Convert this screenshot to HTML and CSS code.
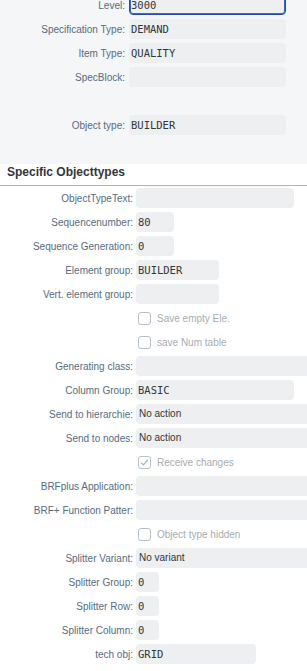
FILE: index.html
```html
<!DOCTYPE html>
<html lang="en">
<head>
    <meta charset="UTF-8">
    <meta name="viewport" content="width=device-width, initial-scale=1.0">
    <title>Object Type Details</title>
    <link rel="stylesheet" href="styles.css">
</head>
<body>
    <!-- General section (scrolled, first row cut off) -->
    <div class="general">
        <div class="form top-form">
            <div class="row"><label>Level:</label><span class="field mono focused w-top">3000</span></div>
            <div class="row"><label>Specification Type:</label><span class="field mono w-top">DEMAND</span></div>
            <div class="row"><label>Item Type:</label><span class="field mono w-top">QUALITY</span></div>
            <div class="row"><label>SpecBlock:</label><span class="field w-top"></span></div>
            <div class="row"></div>
            <div class="row"><label>Object type:</label><span class="field mono w-top">BUILDER</span></div>
        </div>
    </div>

    <h2 class="section-title">Specific Objecttypes</h2>

    <div class="form bottom-form">
        <div class="row"><label>ObjectTypeText:</label><span class="field w-158"></span></div>
        <div class="row"><label>Sequencenumber:</label><span class="field mono w-38">80</span></div>
        <div class="row"><label>Sequence Generation:</label><span class="field mono w-38">0</span></div>
        <div class="row"><label>Element group:</label><span class="field mono w-83">BUILDER</span></div>
        <div class="row"><label>Vert. element group:</label><span class="field w-83"></span></div>
        <div class="row"><label></label><span class="check"><span class="box"></span>Save empty Ele.</span></div>
        <div class="row"><label></label><span class="check"><span class="box"></span>save Num table</span></div>
        <div class="row"><label>Generating class:</label><span class="field w-full"></span></div>
        <div class="row"><label>Column Group:</label><span class="field mono w-158">BASIC</span></div>
        <div class="row"><label>Send to hierarchie:</label><span class="field w-full">No action</span></div>
        <div class="row"><label>Send to nodes:</label><span class="field w-full">No action</span></div>
        <div class="row"><label></label><span class="check"><span class="box checked"><svg width="11" height="11" viewBox="0 0 11 11"><path d="M2.2 5.6 L4.4 7.9 L8.8 2.8" fill="none" stroke="#8fb4d8" stroke-width="1.1"/></svg></span>Receive changes</span></div>
        <div class="row"><label>BRFplus Application:</label><span class="field w-full"></span></div>
        <div class="row"><label>BRF+ Function Patter:</label><span class="field w-full"></span></div>
        <div class="row"><label></label><span class="check"><span class="box"></span>Object type hidden</span></div>
        <div class="row"><label>Splitter Variant:</label><span class="field w-full">No variant</span></div>
        <div class="row"><label>Splitter Group:</label><span class="field mono w-23">0</span></div>
        <div class="row"><label>Splitter Row:</label><span class="field mono w-23">0</span></div>
        <div class="row"><label>Splitter Column:</label><span class="field mono w-23">0</span></div>
        <div class="row"><label>tech obj:</label><span class="field mono w-120">GRID</span></div>
    </div>
</body>
</html>
```

FILE: styles.css
```css
html, body {
    overflow: hidden;
}
body {
    margin: 0;
    padding: 0;
    background-color: #fff;
    font-family: "Liberation Sans", Arial, sans-serif;
    font-size: 10px;
    color: #32363a;
}
.general {
    background-color: #f5f6f7;
    margin-top: -5px;
    padding-bottom: 29px;
}
.form {
    display: flex;
    flex-direction: column;
    gap: 4px;
}
.row {
    display: grid;
    column-gap: 4px;
    align-items: center;
    height: 20px;
}
.top-form .row {
    grid-template-columns: 125px 1fr;
}
.bottom-form .row {
    grid-template-columns: 133px 1fr;
    column-gap: 3px;
}
.row label {
    text-align: right;
    color: #556b82;
    white-space: nowrap;
}
.field {
    display: block;
    box-sizing: border-box;
    height: 20px;
    line-height: 20px;
    padding-left: 3px;
    background-color: #eeeff1;
    border-radius: 4px;
    white-space: nowrap;
    overflow: hidden;
    color: #32363a;
}
.mono {
    font-family: "DejaVu Sans Mono", "Liberation Mono", monospace;
    font-size: 10.5px;
    padding-left: 2px;
}
.focused {
    border: 1px solid #1b4fb3;
    box-shadow: inset 0 0 0 1px #3c66c4;
    line-height: 18px;
    padding-left: 1px;
}
.w-top { width: 157px; }
.w-158 { width: 158px; }
.w-120 { width: 120px; }
.w-83 { width: 83px; }
.w-38 { width: 38px; }
.w-23 { width: 23px; }
/* fields that continue past the right edge of the window */
.w-full {
    width: 171px;
    border-radius: 4px 0 0 4px;
}
.section-title {
    margin: 0;
    height: 21px;
    line-height: 17px;
    padding-left: 7px;
    font-size: 12px;
    font-weight: bold;
    color: #32363a;
    border-bottom: 1px solid #a9b4be;
}
.bottom-form {
    padding-top: 2px;
}
.check {
    display: flex;
    align-items: center;
    gap: 6px;
    padding-left: 2px;
    color: #a6acb2;
    font-size: 10px;
}
.box {
    box-sizing: border-box;
    width: 13px;
    height: 13px;
    border: 1px solid #b8bfc6;
    border-radius: 3px;
    background-color: #fff;
    display: flex;
    align-items: center;
    justify-content: center;
}
```
